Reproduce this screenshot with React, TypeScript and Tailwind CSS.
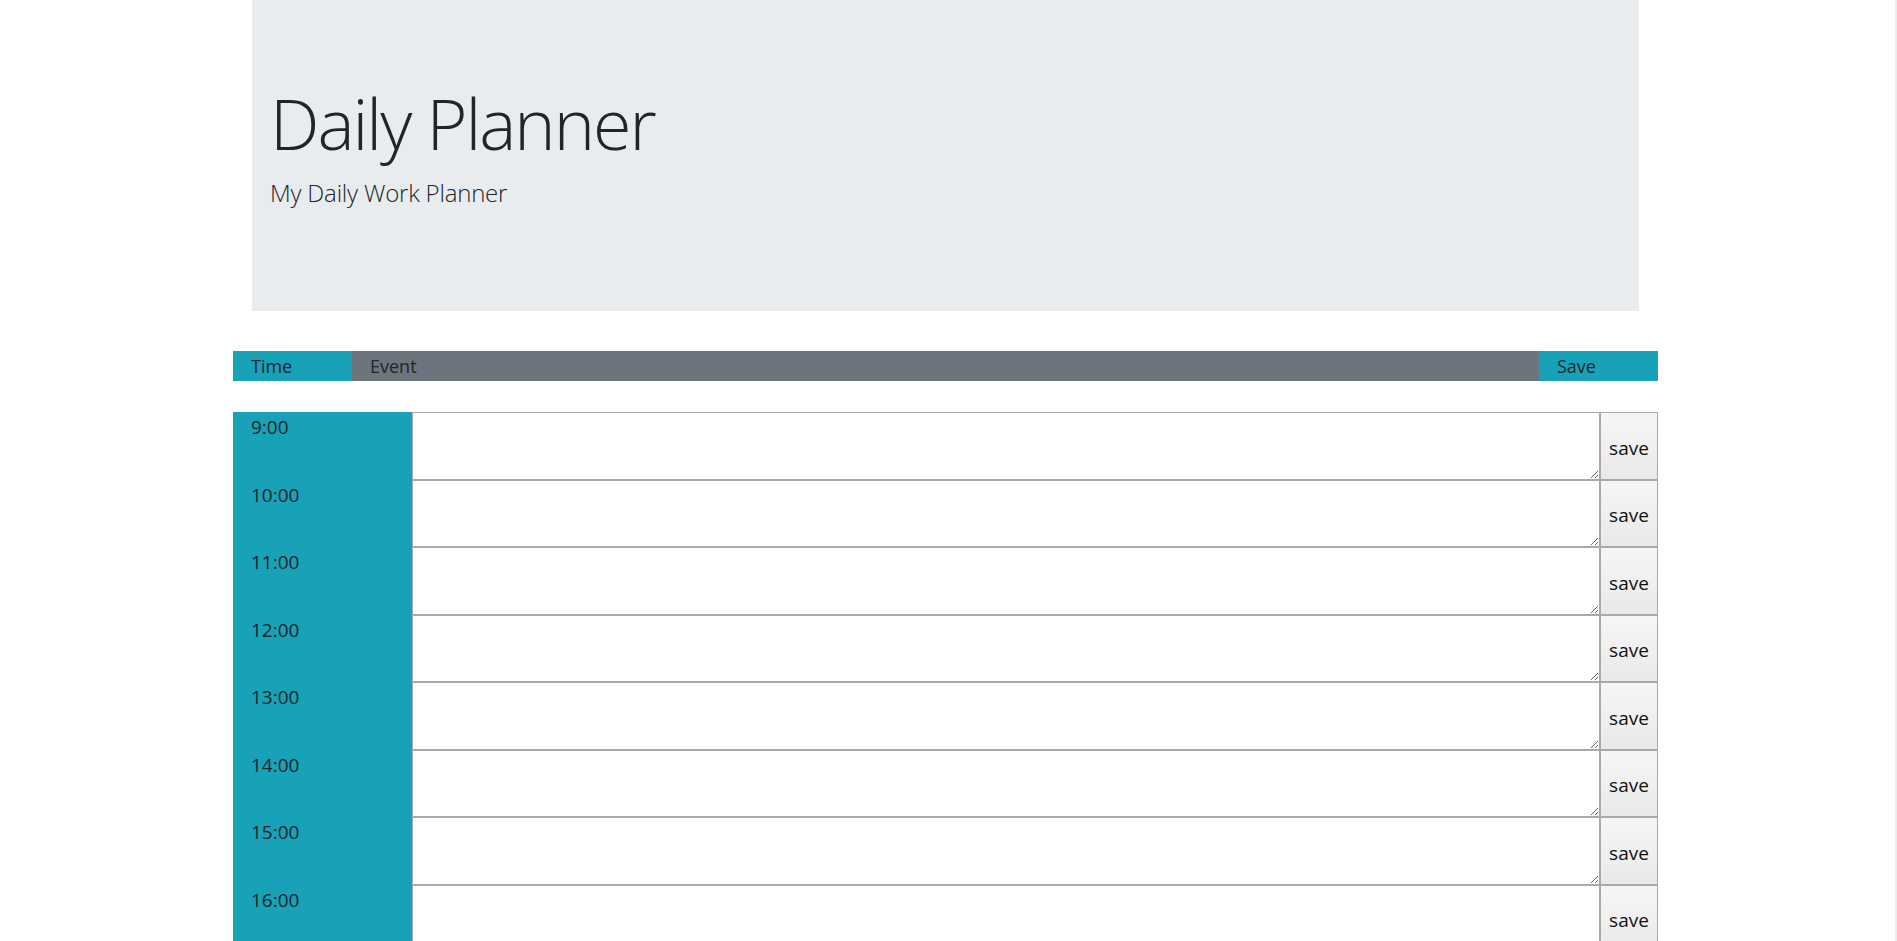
export default function App() {
  const hours = ["9:00", "10:00", "11:00", "12:00", "13:00", "14:00", "15:00", "16:00", "17:00"];
  return (
    <div className="flex h-[941px] w-full overflow-hidden bg-white font-['Open_Sans',sans-serif] text-[#212529]">
      <div className="w-[1891px] shrink-0">
        <header className="mx-auto h-[311px] w-[1387px] bg-[#e9ecef] pl-[18px] pt-[81px]">
          <h1 className="text-[70px] font-light leading-[1.2] tracking-[-2px]">Daily Planner</h1>
          <p className="mt-[10px] text-[24px] font-light leading-[1.5] tracking-[-0.2px]">My Daily Work Planner</p>
        </header>
        <div className="mx-auto mt-[40px] w-[1425px]">
          <div className="flex h-[30px] text-[18px] leading-[24px]">
            <div className="w-[119px] bg-[#17a2b8] pl-[18px] pt-[3px]">Time</div>
            <div className="flex-1 bg-[#6c757d] pl-[18px] pt-[3px]">Event</div>
            <div className="w-[119px] bg-[#17a2b8] pl-[18px] pt-[3px]">Save</div>
          </div>
          <div className="mt-[31px] flex flex-col">
            {hours.map((h) => (
              <div key={h} className="flex h-[67.5px]">
                <div className="w-[179px] shrink-0 bg-[#17a2b8] pl-[18px] pt-[2px] text-[19px] leading-[27px]">{h}</div>
                <textarea className="h-full flex-1 border border-[#a9a9a9] bg-white outline-none" />
                <button className="h-full w-[58px] shrink-0 border border-[#a9a9a9] bg-gradient-to-b from-[#f6f6f6] to-[#e9e9e9] pt-[5px] text-[19px] leading-[27px] text-[#111]">
                  save
                </button>
              </div>
            ))}
          </div>
        </div>
      </div>
      <div className="ml-auto w-[2px] bg-[#ececec]" />
    </div>
  );
}
